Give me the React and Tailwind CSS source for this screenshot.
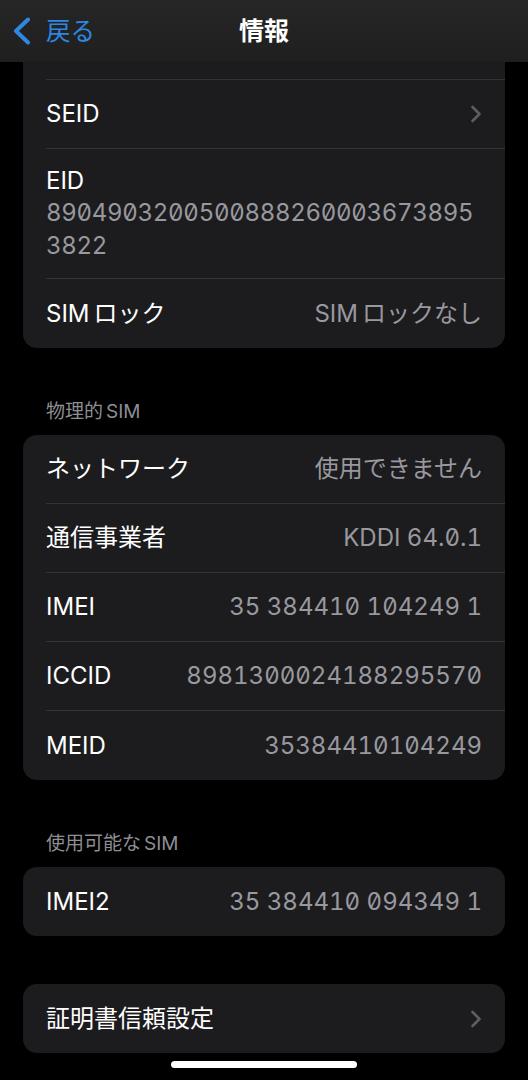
import React from 'react'

const font = { fontFamily: "Inter, 'Noto Sans CJK JP', sans-serif" }

const Chevron = () => (
  <svg width="12" height="18" viewBox="0 0 12 18" className="shrink-0">
    <path d="M2.5 2 L9.5 9 L2.5 16" fill="none" stroke="#5d5d62" strokeWidth="2.6" strokeLinecap="round" strokeLinejoin="round" />
  </svg>
)

// SIM + kana gets a little gap on iOS
const Sim = ({ rest }) => (
  <>
    SIM<span className="ml-[4px]">{rest}</span>
  </>
)

const Row = ({ label, value, chevron, last }) => (
  <div className="pl-[23px]">
    <div className={`flex items-center justify-between h-[69px] pr-[23px] ${last ? '' : 'border-b border-[#333336]'}`}>
      <span className="text-[24px] text-white">{label}</span>
      {value && <span className="text-[24px] text-[#98989e] tabular-nums slashed-zero">{value}</span>}
      {chevron && <Chevron />}
    </div>
  </div>
)

const SectionHeader = ({ children }) => (
  <div className="px-[46px] pt-[52px] pb-[11px] text-[19px] leading-[24px] text-[#8e8e93]">{children}</div>
)

const Card = ({ children, className = '' }) => (
  <div className={`mx-[23px] bg-[#1c1c1e] rounded-[14px] ${className}`}>{children}</div>
)

export default function App() {
  return (
    <div className="w-[528px] h-[1080px] bg-black overflow-hidden" style={font}>
      {/* nav bar */}
      <div className="relative h-[62px] bg-gradient-to-b from-[#262626] to-[#1f1f1f] flex items-center">
        <div className="flex items-center pl-[12px] gap-[14px]">
          <svg width="20" height="28" viewBox="0 0 20 28">
            <path d="M16 2.5 L4 14 L16 25.5" fill="none" stroke="#2f87e2" strokeWidth="4" strokeLinecap="round" strokeLinejoin="round" />
          </svg>
          <span className="text-[24.5px] text-[#2f87e2] leading-none">戻る</span>
        </div>
        <div className="absolute inset-0 flex items-center justify-center pointer-events-none">
          <span className="text-[25px] font-bold text-white leading-none">情報</span>
        </div>
      </div>

      {/* first card, its top cut off by the bar */}
      <Card className="rounded-t-none">
        <div className="pl-[23px]">
          <div className="h-[18px] border-b border-[#333336]" />
        </div>
        <Row label="SEID" chevron />
        <div className="pl-[23px]">
          <div className="pr-[23px] pt-[17px] pb-[16px] border-b border-[#333336]">
            <div className="text-[24px] leading-[30px] text-white">EID</div>
            <div className="text-[24px] leading-[33px] text-[#98989e] tabular-nums slashed-zero tracking-[-0.3px]">
              8904903200500888260003673895
              <br />
              3822
            </div>
          </div>
        </div>
        <Row label={<Sim rest="ロック" />} value={<Sim rest="ロックなし" />} last />
      </Card>

      <SectionHeader>物理的<span className="ml-[3px]">SIM</span></SectionHeader>
      <Card>
        <Row label="ネットワーク" value="使用できません" />
        <Row label="通信事業者" value="KDDI 64.0.1" />
        <Row label="IMEI" value="35 384410 104249 1" />
        <Row label="ICCID" value="8981300024188295570" />
        <Row label="MEID" value="35384410104249" last />
      </Card>

      <SectionHeader>使用可能な<span className="ml-[3px]">SIM</span></SectionHeader>
      <Card>
        <Row label="IMEI2" value="35 384410 094349 1" last />
      </Card>

      <Card className="mt-[48px]">
        <Row label="証明書信頼設定" chevron last />
      </Card>

      <div className="mx-auto mt-[8px] w-[186px] h-[7px] rounded-full bg-white" />
    </div>
  )
}
